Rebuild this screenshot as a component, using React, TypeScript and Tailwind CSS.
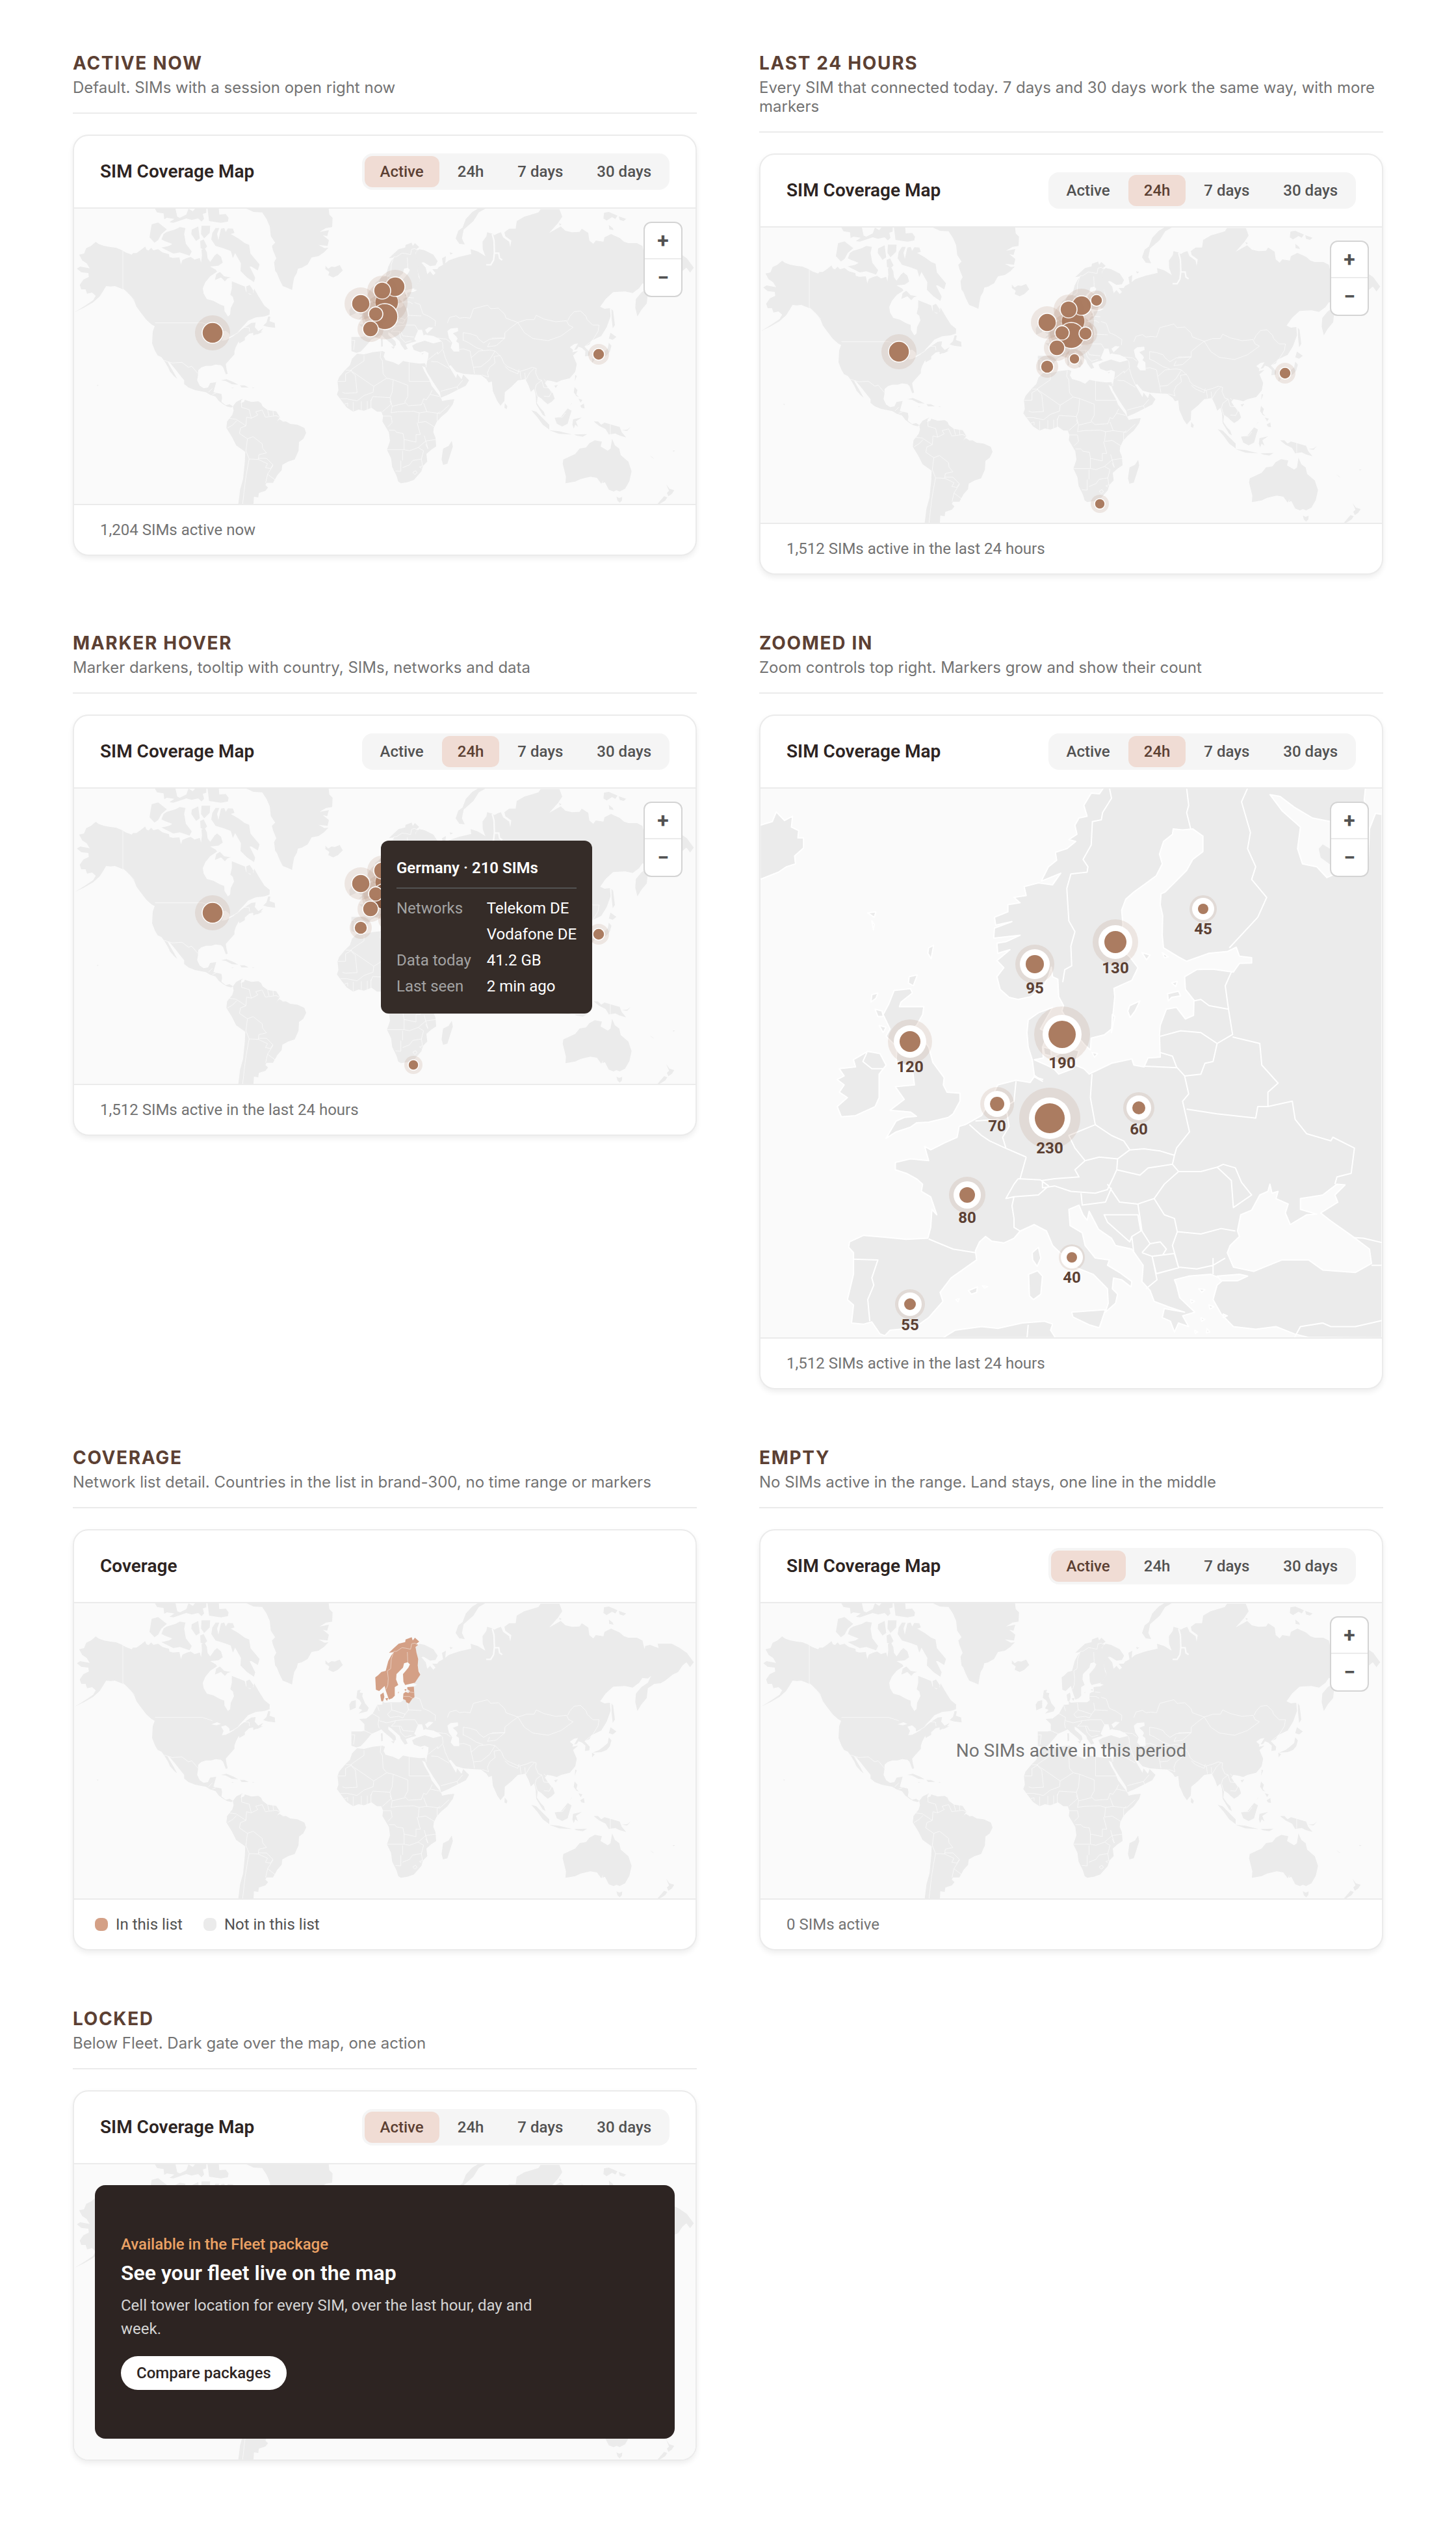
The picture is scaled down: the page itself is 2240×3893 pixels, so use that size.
import React from "react";

type Range = "Active" | "24h" | "7 days" | "30 days";
type Marker = { id: string; x: number; y: number; r: number; halo: number; count?: number };

const RANGES: Range[] = ["Active", "24h", "7 days", "30 days"];

const WEST_LAND = [
  // North America mainland
  "M112,186 125,196 150,205 180,210 205,213 228,222 250,235 278,245 284,238 300,238 322,222 340,208 346,222 356,226 368,214 378,225 400,220 420,235 450,243 452,256 468,260 498,258 505,290 512,270 530,262 550,256 568,268 592,260 598,282 602,250 600,222 615,215 625,235 628,262 640,278 652,262 660,250 672,240 690,255 698,282 678,296 640,300 668,316 680,318 662,330 640,345 618,372 606,400 610,425 625,450 655,458 685,475 705,482 706,505 722,530 732,522 735,492 750,462 745,440 733,430 740,400 740,368 765,378 800,392 806,418 825,430 840,420 843,402 865,440 890,480 915,500 914,522 890,530 850,535 815,550 795,572 765,604 800,580 830,560 850,558 846,580 862,598 885,585 872,603 840,618 838,606 820,610 800,628 800,640 775,655 772,645 758,672 752,690 752,705 725,735 712,750 715,770 721,795 712,797 700,765 690,755 665,752 645,758 620,758 600,765 585,778 584,800 580,825 592,850 610,862 630,858 640,838 668,833 662,855 655,880 692,888 695,905 692,925 712,940 730,935 745,945 738,950 718,946 700,935 680,920 665,900 640,892 620,880 600,876 570,870 540,858 520,842 520,825 500,800 480,775 455,745 443,738 452,755 470,785 488,818 475,808 455,785 446,765 440,755 428,735 415,718 398,710 386,690 372,655 375,600 384,575 370,568 345,545 318,510 300,485 290,460 272,435 245,408 225,400 200,390 180,392 160,390 145,415 130,438 100,465 60,488 15,510 60,482 100,455 112,435 95,420 72,425 65,405 45,405 38,385 55,360 80,348 78,330 45,326 25,310 40,300 84,308 70,285 50,272 35,245 58,240 68,215 90,205Z",
  // Arctic archipelago
  "M370,105 400,97 440,128 415,150 400,178 383,190 360,165Z",
  "M440,140 480,128 500,118 526,122 520,150 528,195 555,230 545,250 500,235 470,240 440,225 415,212 450,205 465,196 430,182 415,175 425,150Z",
  "M555,130 585,115 592,170 575,182 553,150Z",
  "M600,112 640,112 638,145 612,170 598,150Z",
  "M594,182 610,175 626,208 612,222 596,215Z",
  "M650,145 665,122 682,122 672,150 678,178 690,125 705,122 712,140 722,124 745,125 752,145 735,150 770,170 800,192 820,200 826,240 868,290 860,318 830,300 822,300 848,352 842,372 810,350 780,320 782,285 755,238 745,262 735,228 700,215 665,205 645,175Z",
  "M668,335 685,325 705,345 735,350 720,355 708,368 690,350 662,362Z",
  "M385,33 480,33 488,70 500,75 530,60 540,33 560,45 570,33 600,33 612,80 600,92 585,78 555,85 530,78 470,98 452,95 475,80 440,75 428,82 425,55 395,50Z",
  "M628,33 680,33 682,60 712,58 725,75 722,92 690,98 635,90Z",
  "M595,33 622,33 622,52 604,58Z",
  "M806,392 822,385 840,412 835,430 808,420Z",
  "M908,530 918,532 914,552 938,560 940,583 905,578 885,572 900,558Z",
  "M835,615 868,602 884,600 860,612Z",
  // Greenland
  "M808,33 1187,33 1190,60 1205,75 1203,118 1175,122 1145,140 1188,132 1180,160 1160,155 1188,178 1182,205 1140,200 1168,215 1186,213 1165,235 1140,252 1108,258 1090,290 1062,306 1045,310 1040,330 1028,350 1022,380 1018,408 1000,400 975,390 960,360 948,330 940,320 935,280 945,262 930,225 925,205 940,190 920,160 915,115 900,80 880,50 840,48Z",
  "M1172,296 1185,310 1200,300 1215,302 1238,293 1252,318 1230,340 1208,350 1185,340 1190,325 1172,312Z",
  // Caribbean
  "M690,825 715,820 745,832 770,845 740,843 712,828Z M778,848 798,848 818,858 785,858Z M738,858 750,860 742,862Z M835,858 846,859 836,861Z M118,845 125,848 120,852Z",
  // South America
  "M745,945 760,925 790,910 780,930 796,925 800,915 830,925 862,922 875,930 882,945 905,962 945,968 962,995 945,1018 990,1015 1010,1026 1042,1030 1075,1045 1083,1068 1070,1095 1050,1110 1048,1150 1030,1190 1000,1200 973,1215 970,1240 950,1262 930,1298 900,1298 895,1308 907,1320 895,1335 865,1345 862,1365 842,1362 840,1395 770,1395 778,1330 792,1280 800,1200 802,1155 760,1125 740,1085 715,1045 718,1015 742,985 748,965Z",
  "M944,1016 960,1005 975,1014 965,1022Z",
].join(" ");

const WEST_WATER =
  "M690,602 712,596 728,610 730,625 748,618 756,616 735,628 712,640 694,642 702,622Z M645,592 672,582 690,590 668,596Z M665,312 676,305 684,318 672,325Z M745,258 758,250 762,272 750,276Z";

const WEST_BORDERS =
  "M237,228V402L262,425 290,455 M385,560H605L650,575 M728,628 770,604 795,580 820,582 822,600 M428,733 465,745 510,742 540,765 555,760 583,793 M632,880 650,862 M650,890 668,884 M785,915 785,950 820,960 830,1000 808,995 805,1035 M725,1000 760,1005 805,1035 780,1045 775,1070 812,1095 838,1085 880,1118 882,1138 900,1160 865,1168 862,1190 820,1188 805,1150 812,1095 M720,1045 745,1030 762,1012 M830,1000 860,985 850,970 880,962 895,995 945,988 960,995 M905,962 912,990 M930,965 932,988 M862,1185 900,1185 930,1215 918,1232 895,1228 905,1210 862,1190 M930,1218 905,1258 896,1298 M905,1258 940,1285 M820,1188 812,1230 802,1290 790,1395";

const EAST_LAND = [
  // Africa
  "M88,672 120,675 160,665 205,660 217,665 210,685 220,702 255,712 280,724 300,706 330,712 375,718 402,716 405,728 400,735 388,728 400,755 420,790 432,820 455,850 478,878 480,890 510,885 537,882 530,905 505,940 475,965 455,988 442,1015 440,1035 450,1060 453,1100 430,1115 408,1135 412,1170 392,1190 385,1215 350,1255 320,1265 290,1270 278,1262 270,1235 250,1195 245,1155 226,1115 240,1075 235,1035 205,985 208,960 200,940 180,940 155,922 120,935 95,930 70,940 40,920 20,895 -5,860 2,840 -2,800 5,780 35,745 55,725 65,695Z",
  // Eurasia
  "M375,190 400,195 440,215 460,245 450,265 425,268 395,250 385,252 405,275 412,305 425,292 440,310 450,300 435,282 458,282 465,272 485,262 480,232 498,222 495,255 510,242 530,235 560,225 615,212 612,190 645,200 680,222 668,190 667,155 685,130 688,112 710,118 722,125 735,118 752,112 762,135 790,155 795,180 800,150 772,130 768,112 790,95 820,95 825,60 860,40 925,20 935,5 1022,5 1035,40 1015,70 975,115 1028,85 1050,105 1080,112 1115,110 1125,95 1155,115 1160,150 1178,165 1190,150 1225,155 1230,135 1260,120 1300,138 1320,155 1340,162 1380,162 1405,175 1415,215 1418,200 1440,195 1480,210 1475,190 1540,190 1575,208 1610,232 1642,275 1625,298 1608,275 1590,290 1570,320 1545,332 1510,360 1490,372 1460,375 1430,395 1425,440 1400,470 1382,500 1372,460 1375,420 1400,390 1430,370 1445,338 1430,350 1405,348 1390,370 1360,392 1325,385 1270,388 1235,420 1210,455 1230,465 1255,462 1258,500 1240,550 1215,590 1170,612 1160,630 1138,640 1162,665 1160,682 1140,685 1142,660 1125,645 1110,640 1102,652 1090,655 1108,625 1090,628 1070,642 1085,655 1082,665 1108,660 1085,680 1102,720 1095,755 1070,785 1030,795 1010,805 985,798 965,795 955,808 970,830 992,855 1000,880 985,895 968,905 950,890 940,880 922,868 918,900 935,925 950,940 958,962 945,955 930,930 915,905 912,860 905,835 890,848 880,820 865,790 830,795 800,825 770,850 768,890 750,912 735,890 715,845 710,800 695,805 685,790 660,770 620,768 580,765 545,755 520,725 512,730 530,760 545,785 550,765 570,790 578,768 605,795 590,820 550,840 510,860 475,875 470,850 440,805 410,755 402,735 410,715 416,690 418,668 400,660 380,665 350,655 342,635 360,625 400,612 440,625 478,615 460,600 440,590 405,585 440,552 420,550 402,562 412,580 395,588 388,562 370,562 352,605 362,615 340,620 312,630 322,650 308,655 290,630 285,615 245,580 232,572 232,585 265,615 268,632 258,640 245,625 215,600 200,585 180,595 155,605 130,635 105,662 85,668 62,660 62,595 105,595 122,592 122,560 98,537 130,535 160,512 182,472 205,470 205,455 215,462 245,460 290,460 302,450 302,420 320,412 320,390 350,387 366,378 350,375 380,332 370,300 360,240 360,205Z",
  "M90,405 105,402 100,415 115,418 112,432 125,465 142,485 135,502 95,512 112,495 95,488 108,465 100,450 85,440 88,415Z M62,455 82,450 82,485 55,497 52,470Z",
  "M680,3 650,20 625,60 580,100 572,140 585,168 560,165 543,140 555,105 575,90 590,50 620,18 645,3Z",
  "M1228,22 1250,18 1290,35 1280,50 1265,42 1240,58 1225,48Z M1296,38 1330,50 1318,60 1300,55Z M1250,78 1268,92 1272,102 1252,98Z M515,205 530,208 520,215Z M1020,70 1032,75 1024,80Z",
  "M1262,465 1270,475 1278,540 1268,555 1263,510Z",
  "M1258,575 1285,595 1268,608 1250,602Z M1250,622 1262,635 1255,662 1240,680 1215,690 1175,692 1205,680 1225,665 1245,648Z M1172,692 1185,700 1173,714Z",
  "M1095,770 1102,775 1093,798Z M998,820 1015,816 1005,830Z M770,900 782,915 778,928 768,922Z",
  "M525,1075 530,1100 505,1180 485,1185 478,1160 485,1110 510,1098Z",
  "M1092,826 1105,840 1100,860 1112,872 1100,868 1088,850Z M1110,880 1128,885 1120,898Z M1118,912 1135,902 1138,925 1124,922Z M1080,900 1070,912 1078,900Z",
  "M892,933 915,940 975,1000 975,1022 945,1000 920,965Z M975,1025 1020,1030 1080,1045 1020,1042Z M1000,968 1030,962 1060,925 1078,935 1070,960 1060,995 1035,1008 1010,995Z M1085,975 1125,966 1098,985 1108,1010 1095,1000 1088,1018 1082,1000Z M1090,1045 1150,1043 1130,1055 1100,1050Z",
  "M1180,985 1200,985 1215,1000 1230,990 1300,1010 1310,1035 1330,1058 1300,1050 1280,1040 1250,1045 1235,1020 1205,1005Z M1310,1025 1335,1022 1350,1010 1335,1028Z M1440,1142 1462,1158 1450,1152Z M1545,1118 1556,1120 1548,1124Z",
  // Oceania
  "M1265,1065 1278,1095 1298,1110 1305,1140 1340,1170 1355,1215 1345,1260 1325,1295 1300,1308 1285,1302 1272,1308 1250,1300 1232,1265 1220,1270 1225,1255 1215,1272 1195,1245 1165,1240 1120,1250 1095,1262 1050,1270 1052,1240 1037,1180 1040,1160 1095,1135 1115,1110 1145,1105 1160,1085 1185,1072 1218,1078 1212,1100 1245,1120 1258,1110Z M1285,1332 1298,1338 1312,1333 1310,1350 1300,1360 1290,1350Z",
  "M1515,1275 1530,1295 1552,1302 1540,1320 1525,1330 1518,1315 1528,1305Z M1505,1330 1520,1335 1510,1350 1485,1365 1475,1365Z",
  "M198,603 206,603 207,638 199,640Z M245,640 262,640 256,650Z M385,672 396,668 390,676Z",
].join(" ");

const CASPIAN = "M505,568 520,556 553,553 555,568 530,578 545,592 552,602 545,615 558,625 560,662 535,662 520,645 527,622 512,600Z";
const GULFS = "M712,120 720,150 722,205 718,240 705,262 684,262 M722,208 742,208 746,232 758,240";

const EAST_BORDERS =
  "M505,530 515,505 545,497 560,508 585,505 610,508 625,465 690,448 705,465 740,462 770,490 775,508 830,528 800,550 770,575 770,600 730,600 710,600 M830,528 870,515 905,515 915,495 950,512 1005,525 1055,520 1065,540 1085,550 1030,590 970,612 900,602 860,575 830,528 M1060,520 1070,500 1090,478 1120,475 1145,500 1150,515 1175,540 1205,540 1200,570 1175,610 1138,640 M578,612 578,575 610,580 640,590 650,605 672,622 700,605 770,600 730,635 690,640 700,620 M578,610 600,620 640,645 670,655 M485,655 495,690 515,735 M560,652 580,650 610,660 615,690 625,735 630,765 M615,690 650,660 700,655 725,660 700,700 660,732 625,735 M750,680 720,685 725,715 700,735 690,760 695,780 665,770 M725,660 755,690 765,715 780,730 835,755 870,745 895,735 915,740 912,760 925,790 940,795 M770,730 790,748 830,765 835,745 M840,755 845,790 M865,790 862,760 M865,795 885,760 905,740 M940,795 915,815 910,835 920,870 M940,795 950,828 975,830 985,850 975,870 950,868 M950,790 970,810 990,850 M1005,965 1035,965 1050,945 M1257,990V1048 M120,680 120,705 62,745 62,752 165,823 225,785 208,765 205,705 195,690 198,662 M35,748H62L62,750 35,765 35,800H0 M62,755 80,772 88,852 35,855 20,850 M165,823 162,850 120,865 88,890 40,880 10,880 M328,712V800H425 M225,785 255,792 322,818 322,870 M255,792 250,850 240,875 160,870 152,890 M322,870 308,895 325,912 385,908 390,895 395,880 408,885 425,860 435,840 M425,860 470,870 485,890 M512,910 470,948 410,940 395,900 M250,915 310,900 M240,875 250,915 245,945 275,940 350,938 375,945 410,940 M208,960H245L250,990 230,1010 M375,945 370,990 405,985 445,1010 M458,985 458,950 470,940 M235,1025 262,1025 270,1035 300,1040 305,1068 360,1080 360,1045 380,1045 365,990 M305,1068 305,1115 226,1115 M305,1115 330,1120 370,1105 405,1075 453,1068 M398,1050 415,1110 405,1090 M298,1120 298,1165 M290,1165V1215L265,1213 M298,1198 330,1185 345,1165 385,1158 395,1120 370,1105 M385,1158 390,1190 376,1195 385,1200 M345,1220 358,1212 365,1222 355,1230Z M108,892V932 M135,890V930 M152,885V925 M70,895V938 M30,905 45,900 45,915 M205,940 245,905 240,890 M430,708 460,710 512,740 M416,700 460,665 460,675 485,650 M475,845 550,825 575,795 M550,825 555,840 M408,700V735 M155,510 190,530 185,560 190,580 M120,590 155,605 M64,610H78L72,655 M245,462 248,495 228,515 M248,495 280,505 310,515 325,495 320,462 M228,515 240,530 280,525 300,532 310,515 M325,495 385,498 M353,436 378,445 392,488 420,500 450,520 448,545 M190,545 225,555 265,545 310,540 355,540 370,565 M265,545 262,555 245,570 290,570 300,590 350,595 M282,570 290,600 310,620 340,612 M182,475 190,500 M485,650 482,620 460,600 500,605 520,620";

const NORDIC_BALTIC =
  "M355,162 375,180 362,190 355,187 340,190 335,215 310,210 320,228 322,275 305,280 300,300 270,330 268,355 278,380 262,390 262,430 250,442 235,447 222,410 215,385 190,408 175,402 172,345 185,335 200,320 220,315 232,270 245,245 258,228 235,232 255,212 280,190 310,182 312,170 340,160 345,175Z M355,187 370,195 358,205 362,230 370,260 368,290 372,318 380,332 355,370 310,380 302,365 300,330 325,300 332,285 322,275 320,228 310,210 335,215 340,190Z M195,425 210,415 214,435 208,455 200,455 197,440Z M218,442 232,440 226,454Z M320,390 350,388 353,436 342,445 328,466 315,460 312,450 300,445 302,420 312,412 325,418 332,408 320,400Z M305,402 316,398 314,408Z M277,415 281,410 279,420Z";
const NORDIC_BORDERS =
  "M320,228 322,275 M310,210 295,208 270,225 258,225 246,260 243,305 228,315 232,350 230,380 222,400 M310,210 335,215 340,190 355,187 365,195 M325,412 350,415 M302,433 330,433 345,442";

const MARKERS: Marker[] = [
  { id: "dk", x: 481, y: 144, r: 18, halo: 32 },
  { id: "se", x: 494, y: 120, r: 15, halo: 26 },
  { id: "no", x: 474, y: 126, r: 13, halo: 23 },
  { id: "fi", x: 517, y: 112, r: 9, halo: 15 },
  { id: "de", x: 478, y: 166, r: 20, halo: 35 },
  { id: "gb", x: 441, y: 146, r: 14, halo: 25 },
  { id: "nl", x: 464, y: 162, r: 11, halo: 19 },
  { id: "fr", x: 456, y: 185, r: 12, halo: 20 },
  { id: "pl", x: 500, y: 163, r: 10, halo: 18 },
  { id: "es", x: 441, y: 214, r: 10, halo: 17 },
  { id: "it", x: 483, y: 202, r: 8, halo: 15 },
  { id: "us", x: 213, y: 191, r: 16, halo: 27 },
  { id: "jp", x: 807, y: 224, r: 9, halo: 16 },
  { id: "za", x: 522, y: 425, r: 8, halo: 14 },
];
const ACTIVE_IDS = ["dk", "se", "no", "de", "gb", "nl", "fr", "us", "jp"];

const EUROPE_MARKERS: Marker[] = [
  { id: "gb", x: 230, y: 389, r: 16, halo: 34, count: 120 },
  { id: "no", x: 422, y: 270, r: 14, halo: 30, count: 95 },
  { id: "se", x: 546, y: 236, r: 17, halo: 35, count: 130 },
  { id: "fi", x: 681, y: 185, r: 8, halo: 21, count: 45 },
  { id: "dk", x: 464, y: 378, r: 21, halo: 43, count: 190 },
  { id: "nl", x: 364, y: 485, r: 11, halo: 26, count: 70 },
  { id: "de", x: 445, y: 507, r: 23, halo: 47, count: 230 },
  { id: "pl", x: 582, y: 491, r: 10, halo: 24, count: 60 },
  { id: "fr", x: 318, y: 625, r: 12, halo: 28, count: 80 },
  { id: "it", x: 479, y: 721, r: 8, halo: 20, count: 40 },
  { id: "es", x: 230, y: 793, r: 9, halo: 23, count: 55 },
];

function WorldMap({ markers = [], covered = false, hovered }: { markers?: Marker[]; covered?: boolean; hovered?: string }) {
  return (
    <svg viewBox="0 0 956 454" className="block w-full" role="img" aria-label="World map">
      <g transform="translate(-4 -11) scale(.33333)">
        <path d={WEST_LAND} fill="#ebebeb" />
        <path d={WEST_WATER} fill="#fafafa" />
        <path d={WEST_BORDERS} fill="none" stroke="#fafafa" strokeWidth="2.5" />
      </g>
      <g transform="translate(406 -1) scale(.33333)">
        <path d={EAST_LAND} fill="#ebebeb" />
        <path d={CASPIAN} fill="#fafafa" />
        <path d={GULFS} fill="none" stroke="#fafafa" strokeWidth="7" />
        <path d={EAST_BORDERS} fill="none" stroke="#fafafa" strokeWidth="2.5" />
        <path d={NORDIC_BALTIC} fill={covered ? "#d4a086" : "#ebebeb"} />
        <path d={NORDIC_BORDERS} fill="none" stroke={covered ? "#ecd6ca" : "#fafafa"} strokeWidth="2.5" />
      </g>
      {markers.map((m) => (
        <g key={m.id}>
          <circle cx={m.x} cy={m.y} r={m.halo} fill="#ab7c61" fillOpacity=".15" />
          <circle cx={m.x} cy={m.y} r={m.r} fill={m.id === hovered ? "#84573f" : "#ab7c61"} stroke="#fff" strokeWidth="1.5" />
        </g>
      ))}
    </svg>
  );
}

const EUROPE_LAND = [
  "M860,22 850,38 830,36 812,70 820,100 800,105 790,125 795,150 775,165 792,170 770,190 742,200 745,222 725,240 707,280 755,258 735,290 700,285 665,295 670,320 640,325 655,340 625,345 625,365 592,380 595,402 635,392 592,410 590,438 655,430 620,448 598,452 600,480 630,470 598,500 615,520 598,545 606,580 628,602 650,608 682,600 712,570 725,545 732,518 735,545 748,552 750,600 762,625 758,640 790,700 815,735 828,748 830,715 862,706 880,690 888,600 886,577 930,555 945,520 925,490 905,470 903,440 908,400 905,360 915,330 935,310 960,290 990,265 1005,232 998,205 1008,170 1030,150 1032,135 1055,138 1080,135 1105,155 1105,198 1080,220 1065,250 1030,290 1012,310 1002,315 1000,345 1006,375 1005,430 1008,465 1045,490 1065,502 1120,480 1165,475 1187,463 1195,488 1225,492 1225,507 1195,508 1180,532 1130,524 1090,525 1060,545 1062,580 1083,610 1082,652 1062,662 1040,630 1015,635 1000,680 998,705 1000,768 970,770 960,795 935,790 930,773 880,785 825,815 812,800 790,790 785,800 750,815 738,800 720,790 690,775 712,770 710,740 725,700 705,690 735,630 700,645 675,665 672,700 675,740 685,775 690,818 710,835 690,822 680,838 645,832 600,845 585,880 560,930 520,955 505,960 500,990 470,1005 435,1025 420,1015 430,1055 385,1050 348,1060 348,1080 375,1090 400,1105 415,1120 412,1140 435,1155 450,1205 438,1190 435,1240 428,1270 375,1273 330,1268 270,1262 235,1280 233,1295 245,1310 245,1370 230,1440 245,1455 240,1505 270,1508 290,1502 310,1535 322,1540 335,1525 395,1518 430,1490 465,1445 458,1420 485,1380 548,1330 545,1305 555,1280 570,1265 585,1278 615,1283 640,1270 655,1250 690,1232 720,1250 735,1290 790,1350 835,1370 870,1410 872,1450 865,1475 890,1450 895,1425 882,1410 885,1380 905,1385 928,1405 930,1390 900,1365 870,1345 875,1330 840,1325 815,1290 808,1255 778,1235 775,1190 800,1178 810,1205 820,1220 825,1195 848,1245 880,1270 890,1290 930,1300 958,1345 955,1390 975,1415 985,1445 1020,1460 1060,1475 1010,1465 1005,1490 1025,1500 1035,1530 1045,1505 1070,1515 1055,1485 1085,1475 1048,1435 1040,1400 1035,1385 1070,1375 1125,1370 1155,1385 1140,1400 1130,1440 1150,1480 1180,1515 1235,1522 1285,1515 1330,1535 1365,1545 1546,1546 1546,22Z",
  "M345,583 385,578 390,590 362,615 358,628 418,628 415,650 400,680 385,690 405,700 430,740 440,782 468,825 466,845 475,865 507,868 507,890 490,925 478,935 430,948 400,950 385,962 350,975 325,993 350,945 370,935 400,932 385,920 335,915 370,885 348,850 395,845 390,800 350,780 352,740 325,710 335,690 318,650 332,620Z",
  "M210,800 250,795 245,775 280,752 310,758 325,790 308,815 308,880 298,905 250,930 215,933 205,905 230,880 210,865 222,845 205,830 222,820Z",
  "M15,125 45,115 55,88 75,112 95,100 92,130 110,140 108,160 122,160 122,188 100,210 102,232 80,240 60,255 15,275Z",
  "M280,368 300,365 296,380Z M290,390 296,400 294,415Z M430,465 442,458 436,495 428,480Z M382,545 402,540 392,570 380,562Z M290,595 305,590 300,605 288,615Z M298,635 315,640 318,655 305,655Z M308,680 325,685 318,700Z",
  "M925,625 950,612 938,640 926,658 920,640Z M882,650 888,655 880,700Z M1018,592 1045,585 1050,598 1028,602 1020,612Z M1028,562 1042,558 1038,572Z M955,478 975,485 966,498Z M1005,478 1020,490 1010,492Z M832,755 846,758 838,768Z",
  "M740,765 775,745 800,750 790,785 760,782Z M712,740 730,745 732,765 715,760Z",
  "M685,1310 700,1295 706,1325 697,1348 686,1330Z M676,1370 698,1360 710,1375 706,1425 688,1440 678,1430Z M782,1475 865,1468 850,1518 825,1510 785,1488Z M528,1415 550,1405 548,1420 535,1425Z M562,1402 575,1404 568,1408Z M497,1440 505,1438 502,1446Z",
  "M465,1546 495,1525 560,1515 600,1520 660,1505 715,1500 735,1508 730,1525 742,1546Z",
  "M1095,1410 1110,1412 1102,1420Z M1120,1455 1132,1460 1122,1466Z M1075,1440 1085,1445 1076,1450Z M1100,1490 1110,1495 1102,1500Z M1155,1480 1165,1485 1155,1490Z M1115,1520 1122,1530 1114,1532Z M1085,1525 1092,1530 1086,1534Z",
].join(" ");

const EUROPE_WATER =
  "M1270,40 1295,45 1330,75 1375,105 1420,115 1500,115 1510,80 1502,55 1505,22 1546,22 1546,95 1530,92 1515,135 1512,220 1440,255 1410,270 1385,240 1350,232 1338,190 1345,130 1300,85Z M1172,1290 1195,1265 1190,1250 1198,1205 1225,1192 1245,1150 1265,1140 1270,1120 1275,1145 1290,1140 1285,1160 1315,1175 1308,1200 1320,1232 1360,1205 1385,1203 1345,1190 1345,1160 1400,1150 1435,1120 1455,1122 1430,1150 1437,1170 1395,1200 1420,1222 1470,1262 1515,1300 1520,1340 1480,1365 1400,1358 1365,1330 1300,1330 1230,1362 1180,1350 1165,1310Z M1140,1375 1195,1370 1215,1375 1190,1388 1150,1388Z";

const EUROPE_BORDERS =
  "M875,22 880,50 858,90 855,110 833,115 830,180 810,220 822,240 820,255 780,260 770,300 775,390 790,420 780,460 782,515 765,525 760,560 M1065,22 1070,70 1065,90 1075,135 M1215,22 1200,60 1222,145 1215,190 1235,240 1225,275 1262,325 1240,380 1170,465 M1175,532 1160,570 1168,635 1120,625 1100,608 1083,612 M1168,635 1178,705 1140,730 1100,700 1050,695 1000,710 M1140,730 1130,780 1110,785 1100,815 1060,820 1040,795 1030,765 1000,755 M1178,712 1245,730 1250,790 1290,840 1265,865 1265,905 1240,905 1235,937 1140,925 1065,912 M960,793 1040,797 M1060,820 1070,870 1055,890 1072,975 1040,1020 1035,1040 1000,1028 960,1022 925,1025 910,1000 880,985 840,955 828,880 832,815 M1265,905 1325,890 1332,940 1360,980 1420,1000 1425,990 1478,1020 1470,1090 1435,1100 1430,1120 M840,955 775,985 790,1020 815,1055 850,1045 895,1050 925,1025 M895,1050 893,1080 950,1095 970,1075 1030,1065 1035,1040 M1030,1065 1045,1085 1100,1085 1140,1073 1175,1110 1180,1185 1225,1150 1200,1115 1185,1075 1155,1065 1140,1073 M815,1055 790,1080 800,1100 740,1105 710,1110 710,1130 740,1125 780,1140 840,1145 870,1135 885,1100 893,1080 M650,1105 705,1108 725,1125 700,1150 640,1155 620,1160 640,1120 650,1105 M670,1045 655,1105 M530,955 560,985 580,1000 615,1018 670,1045 M645,835 640,890 620,905 628,960 612,990 620,1020 M545,945 600,940 620,950 M640,1155 635,1180 640,1215 640,1240 655,1250 M430,1272 490,1300 545,1310 M245,1328 305,1330 290,1380 295,1400 280,1440 285,1500 M805,1145 808,1178 865,1170 880,1130 M870,1120 900,1170 945,1175 985,1160 1010,1120 1045,1085 M862,1205 945,1205 952,1250 930,1265 925,1280 870,1225Z M945,1175 955,1250 975,1285 955,1310 M985,1160 1010,1205 1035,1215 1042,1252 M1042,1252 1100,1258 1150,1243 1185,1250 M1042,1252 1030,1290 1045,1350 1090,1355 1130,1345 1160,1325 M980,1320 1035,1312 1045,1352 990,1368 980,1320 M930,1265 935,1310 M975,1285 1000,1280 1015,1300 1005,1318 M955,1310 980,1320 992,1385 965,1410 M1045,1352 992,1368 M1130,1325 1130,1370 M1475,1268 1500,1270 1546,1282 M1520,1345 1546,1345 M1330,1546 1345,1515 1400,1505 1420,1515 1480,1515 1546,1498 M278,755 268,780 290,800 320,800 M675,1510 672,1546 M688,822 712,830";

function EuropeMap() {
  return (
    <svg viewBox="0 0 956 844" className="block w-full" role="img" aria-label="Map of Europe">
      <g transform="translate(-10 -13) scale(.625 .5548)" strokeLinejoin="round">
        <path d={EUROPE_LAND} fill="#ebebeb" stroke="#fff" strokeWidth="2" vectorEffect="non-scaling-stroke" />
        <path d={EUROPE_WATER} fill="#fafafa" stroke="#fff" strokeWidth="2" vectorEffect="non-scaling-stroke" />
        <path d="M1390,190 1400,178 1425,195 1420,235 1395,215Z" fill="#ebebeb" />
        <path d={EUROPE_BORDERS} fill="none" stroke="#fff" strokeWidth="2" vectorEffect="non-scaling-stroke" />
      </g>
      {EUROPE_MARKERS.map((m) => (
        <g key={m.id}>
          <circle cx={m.x} cy={m.y} r={m.halo} fill="#ab7c61" fillOpacity=".15" />
          <circle cx={m.x} cy={m.y} r={m.r + 9} fill="#fff" />
          <circle cx={m.x} cy={m.y} r={m.r} fill="#ab7c61" />
          <text x={m.x} y={m.y + m.r + 31} textAnchor="middle" className="fill-[#5c4033] font-[Roboto,sans-serif] text-2xl font-bold">
            {m.count}
          </text>
        </g>
      ))}
    </svg>
  );
}

function RangeTabs({ selected }: { selected: Range }) {
  return (
    <div role="group" aria-label="Time range" className="flex gap-1 rounded-2xl bg-[#f5f5f5] p-1">
      {RANGES.map((range) => (
        <button
          key={range}
          type="button"
          aria-pressed={range === selected}
          className={
            range === selected
              ? "h-12 rounded-xl bg-[#f0dcd4] px-6 text-2xl font-medium text-[#5c4033]"
              : "h-12 rounded-xl px-6 text-2xl font-medium text-[#525252]"
          }
        >
          {range}
        </button>
      ))}
    </div>
  );
}

function ZoomControls() {
  return (
    <div className="absolute top-5 right-5 flex w-15 flex-col overflow-hidden rounded-xl border-2 border-[#d4d4d4] bg-white text-[32px] leading-none font-bold text-[#525252]">
      <button type="button" aria-label="Zoom in" className="h-14 border-b-2 border-[#ebebeb]">
        +
      </button>
      <button type="button" aria-label="Zoom out" className="h-14">
        −
      </button>
    </div>
  );
}

function Tooltip() {
  return (
    <div role="tooltip" className="absolute top-20 left-[472px] rounded-xl bg-[#352c28] p-6 text-2xl leading-9 text-white">
      <p className="mb-3 border-b-2 border-[#525252] pb-3 font-semibold">Germany · 210 SIMs</p>
      <dl className="grid grid-cols-[auto_auto] gap-x-6 gap-y-1">
        <dt className="row-span-2 text-[#a3a3a3]">Networks</dt>
        <dd>Telekom DE</dd>
        <dd>Vodafone DE</dd>
        <dt className="text-[#a3a3a3]">Data today</dt>
        <dd>41.2 GB</dd>
        <dt className="text-[#a3a3a3]">Last seen</dt>
        <dd>2 min ago</dd>
      </dl>
    </div>
  );
}

function Gate() {
  return (
    <div className="absolute inset-8 flex flex-col items-start justify-center rounded-2xl bg-[#2d2422] px-10 text-2xl">
      <p className="leading-8 font-medium text-[#eba265]">Available in the Fleet package</p>
      <h4 className="mt-2 text-[32px] leading-10 font-semibold text-white">See your fleet live on the map</h4>
      <p className="mt-3 max-w-[680px] leading-9 text-[#d4d4d4]">
        Cell tower location for every SIM, over the last hour, day and week.
      </p>
      <button type="button" className="mt-6 h-13 rounded-full bg-white px-6 font-medium text-[#2d2422]">
        Compare packages
      </button>
    </div>
  );
}

type StateProps = {
  name: string;
  note: string;
  title?: string;
  range?: Range;
  footer?: React.ReactNode;
  zoom?: boolean;
  children: React.ReactNode;
};

function MapState({ name, note, title = "SIM Coverage Map", range, footer, zoom, children }: StateProps) {
  return (
    <section>
      <header className="border-b-2 border-[#ebebeb] pb-6 font-[Inter,sans-serif]">
        <h2 className="text-[28px] leading-[34px] font-bold tracking-[0.06em] text-[#5c4033] uppercase">{name}</h2>
        <p className="mt-1.5 text-2xl leading-[29px] text-[#737373]">{note}</p>
      </header>
      <article className="mt-8 overflow-hidden rounded-3xl border-2 border-[#ebebeb] bg-white shadow-[0_4px_8px_rgba(0,0,0,0.07)]">
        <div className="flex h-28 items-center justify-between border-b-2 border-[#ebebeb] px-10">
          <h3 className="text-[28px] font-semibold text-[#2d2422]">{title}</h3>
          {range && <RangeTabs selected={range} />}
        </div>
        <div className="relative bg-[#fafafa]">
          {children}
          {zoom && <ZoomControls />}
        </div>
        {footer && <div className="flex h-[78px] items-center border-t-2 border-[#ebebeb] text-2xl">{footer}</div>}
      </article>
    </section>
  );
}

function Status({ children }: { children: React.ReactNode }) {
  return <p className="px-10 text-[#737373]">{children}</p>;
}

export default function App() {
  return (
    <main className="grid min-h-screen grid-cols-2 content-start items-start gap-x-24 gap-y-22 bg-white px-28 py-20 font-[Roboto,sans-serif] antialiased">
      <MapState name="Active now" note="Default. SIMs with a session open right now" range="Active" zoom footer={<Status>1,204 SIMs active now</Status>}>
        <WorldMap markers={MARKERS.filter((m) => ACTIVE_IDS.includes(m.id))} />
      </MapState>

      <MapState
        name="Last 24 hours"
        note="Every SIM that connected today. 7 days and 30 days work the same way, with more markers"
        range="24h"
        zoom
        footer={<Status>1,512 SIMs active in the last 24 hours</Status>}
      >
        <WorldMap markers={MARKERS} />
      </MapState>

      <MapState
        name="Marker hover"
        note="Marker darkens, tooltip with country, SIMs, networks and data"
        range="24h"
        zoom
        footer={<Status>1,512 SIMs active in the last 24 hours</Status>}
      >
        <WorldMap markers={MARKERS} hovered="de" />
        <Tooltip />
      </MapState>

      <MapState
        name="Zoomed in"
        note="Zoom controls top right. Markers grow and show their count"
        range="24h"
        zoom
        footer={<Status>1,512 SIMs active in the last 24 hours</Status>}
      >
        <EuropeMap />
      </MapState>

      <MapState
        name="Coverage"
        note="Network list detail. Countries in the list in brand-300, no time range or markers"
        title="Coverage"
        footer={
          <ul className="flex gap-8 px-8 text-[#525252]">
            <li className="flex items-center gap-3">
              <span className="size-5 rounded-lg bg-[#d4a086]" />
              In this list
            </li>
            <li className="flex items-center gap-3">
              <span className="size-5 rounded-lg bg-[#ebebeb]" />
              Not in this list
            </li>
          </ul>
        }
      >
        <WorldMap covered />
      </MapState>

      <MapState
        name="Empty"
        note="No SIMs active in the range. Land stays, one line in the middle"
        range="Active"
        zoom
        footer={<Status>0 SIMs active</Status>}
      >
        <WorldMap />
        <p className="absolute inset-0 flex items-center justify-center text-[28px] text-[#737373]">No SIMs active in this period</p>
      </MapState>

      <MapState name="Locked" note="Below Fleet. Dark gate over the map, one action" range="Active">
        <WorldMap />
        <Gate />
      </MapState>
    </main>
  );
}
